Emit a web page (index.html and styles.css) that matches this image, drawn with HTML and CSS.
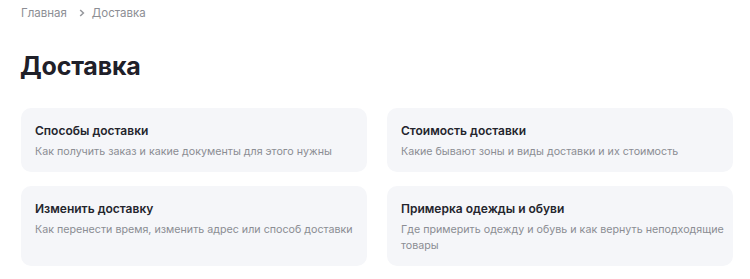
FILE: index.html
```html
<!DOCTYPE html>
<html lang="ru">
<head>
    <meta charset="UTF-8">
    <meta name="viewport" content="width=device-width, initial-scale=1.0">
    <title>Доставка</title>
    <link rel="stylesheet" href="styles.css">
</head>
<body>
    <div class="page">
        <nav class="breadcrumbs">
            <a href="#">Главная</a>
            <svg class="sep" width="6" height="8" viewBox="0 0 6 8" aria-hidden="true">
                <path d="M1.2 1 L4.4 4 L1.2 7" fill="none" stroke="currentColor" stroke-width="1.5"/>
            </svg>
            <span>Доставка</span>
        </nav>

        <h1>Доставка</h1>

        <div class="cards">
            <a class="card" href="#">
                <div class="card-title">Способы доставки</div>
                <div class="card-text">Как получить заказ и какие документы для этого нужны</div>
            </a>
            <a class="card" href="#">
                <div class="card-title">Стоимость доставки</div>
                <div class="card-text">Какие бывают зоны и виды доставки и их стоимость</div>
            </a>
            <a class="card" href="#">
                <div class="card-title">Изменить доставку</div>
                <div class="card-text">Как перенести время, изменить адрес или способ доставки</div>
            </a>
            <a class="card" href="#">
                <div class="card-title">Примерка одежды и обуви</div>
                <div class="card-text">Где примерить одежду и обувь и как вернуть неподходящие товары</div>
            </a>
        </div>
    </div>
</body>
</html>
```

FILE: styles.css
```css
body {
    margin: 0;
    background-color: #fff;
    font-family: Inter, "Noto Sans", sans-serif;
    color: #1f2029;
}
.page {
    padding: 5px 17px 0 21px;
}
/* Хлебные крошки */
.breadcrumbs {
    display: flex;
    align-items: center;
    gap: 6px;
    font-size: 11.5px;
    line-height: 16px;
    color: #8c8e94;
}
.breadcrumbs a {
    color: inherit;
    text-decoration: none;
}
.breadcrumbs .sep {
    margin: 0 1px 0 6px;
    color: #95979c;
}
h1 {
    margin: 29px 0 0 -1px;
    font-size: 25px;
    line-height: 32px;
    font-weight: 700;
    letter-spacing: -0.2px;
}
/* Карточки */
.cards {
    display: grid;
    grid-template-columns: 1fr 1fr;
    gap: 14px 20px;
    margin-top: 26px;
}
.card {
    display: block;
    background-color: #f5f6f9;
    border-radius: 10px;
    padding: 15px 4px 12px 14px;
    text-decoration: none;
    color: inherit;
}
.card-title {
    font-size: 12px;
    line-height: 15px;
    font-weight: 600;
    color: #24252d;
}
.card-text {
    margin-top: 6px;
    font-size: 10.7px;
    line-height: 16px;
    color: #8b8d93;
}
```
